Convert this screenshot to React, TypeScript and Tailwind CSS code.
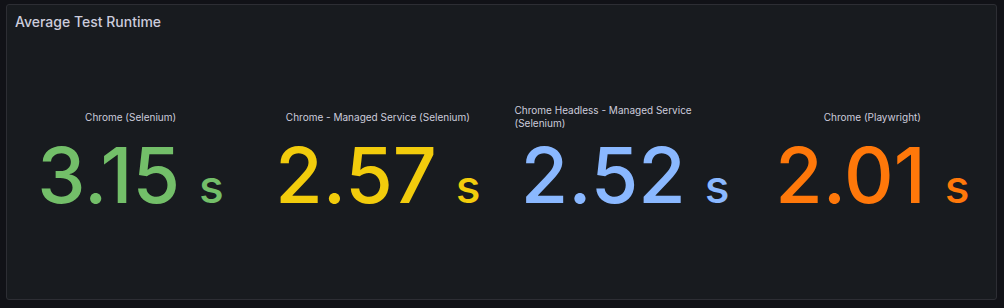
import React from "react";

interface Stat {
  label: string;
  value: string;
  color: string;
  wrap?: boolean;
}

const stats: Stat[] = [
  { label: "Chrome (Selenium)", value: "3.15", color: "text-[#73bf69]" },
  { label: "Chrome - Managed Service (Selenium)", value: "2.57", color: "text-[#f2cc0c]" },
  { label: "Chrome Headless - Managed Service (Selenium)", value: "2.52", color: "text-[#8ab8ff]", wrap: true },
  { label: "Chrome (Playwright)", value: "2.01", color: "text-[#ff780a]" },
];

const StatCell = ({ stat }: { stat: Stat }) => {
  return (
    <div className="flex flex-col items-center">
      <div
        className={
          stat.wrap
            ? "h-[26px] w-full pl-[13px] pr-[50px] flex items-center text-left"
            : "h-[26px] w-full px-3 flex items-center justify-center text-center"
        }
      >
        <span className="text-[10px] leading-[13px] text-[#ccccdc]">{stat.label}</span>
      </div>
      <div className={`mt-[7px] flex items-baseline leading-none font-medium ${stat.color}`}>
        <span className="text-[77px] leading-none">{stat.value}</span>
        <span className="ml-[19px] text-[46px] leading-none">s</span>
      </div>
    </div>
  );
};

export default function App() {
  return (
    <div
      className="h-[308px] w-[1004px] bg-[#111217] pl-[6px] pr-[7px] pt-[4px] pb-[8px]"
      style={{ fontFamily: "Inter, 'Noto Sans', sans-serif" }}
    >
      <div className="h-full rounded-[3px] border border-[#2d2e34] bg-[#181b1f]">
        <div className="h-8 px-2 flex items-center">
          <h2 className="text-[14px] font-medium text-[#ccccdc]">Average Test Runtime</h2>
        </div>
        <div className="mt-[67px] grid grid-cols-4">
          {stats.map((s) => (
            <StatCell key={s.label} stat={s} />
          ))}
        </div>
      </div>
    </div>
  );
}
